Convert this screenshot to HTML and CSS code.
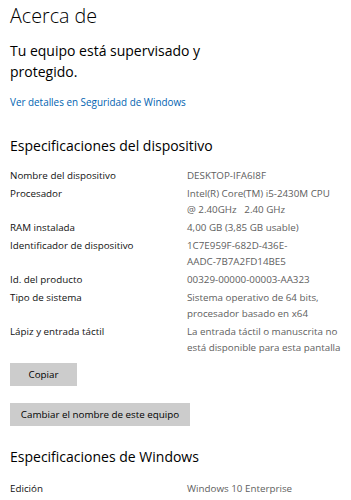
FILE: index.html
```html
<!DOCTYPE html>
<html lang="es">
<head>
<meta charset="utf-8">
<title>Acerca de</title>
<link rel="stylesheet" href="styles.css">
</head>
<body>
<main class="page">
  <h1 class="title">Acerca de</h1>
  <p class="status">Tu equipo está supervisado y<br>protegido.</p>
  <a class="link" href="#">Ver detalles en Seguridad de Windows</a>

  <h2 class="section">Especificaciones del dispositivo</h2>
  <dl class="specs">
    <div class="row"><dt>Nombre del dispositivo</dt><dd>DESKTOP-IFA6I8F</dd></div>
    <div class="row"><dt>Procesador</dt><dd>Intel(R) Core(TM) i5-2430M CPU<br>@ 2.40GHz&nbsp;&nbsp; 2.40 GHz</dd></div>
    <div class="row"><dt>RAM instalada</dt><dd>4,00 GB (3,85 GB usable)</dd></div>
    <div class="row"><dt>Identificador de dispositivo</dt><dd>1C7E959F-682D-436E-<br>AADC-7B7A2FD14BE5</dd></div>
    <div class="row"><dt>Id. del producto</dt><dd>00329-00000-00003-AA323</dd></div>
    <div class="row"><dt>Tipo de sistema</dt><dd>Sistema operativo de 64 bits,<br>procesador basado en x64</dd></div>
    <div class="row"><dt>Lápiz y entrada táctil</dt><dd>La entrada táctil o manuscrita no<br>está disponible para esta pantalla</dd></div>
  </dl>

  <button class="btn btn-copy" type="button">Copiar</button>
  <button class="btn btn-rename" type="button">Cambiar el nombre de este equipo</button>

  <h2 class="section section-win">Especificaciones de Windows</h2>
  <dl class="specs specs-win">
    <div class="row"><dt>Edición</dt><dd>Windows 10 Enterprise</dd></div>
  </dl>
</main>
</body>
</html>
```
FILE: styles.css
```css
html, body {
  margin: 0;
  padding: 0;
  background: #ffffff;
}

body {
  font-family: "Open Sans", "Noto Sans", sans-serif;
  color: #000000;
  overflow: hidden;
}

.page {
  display: flex;
  flex-direction: column;
  align-items: flex-start;
  padding: 1px 10px 0 10px;
}

.title {
  margin: 0;
  font-size: 19.7px;
  font-weight: 300;
  line-height: 30px;
}

.status {
  margin: 9px 0 0 0;
  font-size: 14px;
  line-height: 21px;
  font-weight: 400;
}

.link {
  margin-top: 12px;
  font-size: 9.9px;
  line-height: 16px;
  color: #0063b1;
  text-decoration: none;
}

.section {
  margin: 25px 0 0 0;
  font-size: 14px;
  line-height: 22px;
  font-weight: 400;
}

.specs {
  margin: 11px 0 0 0;
  display: flex;
  flex-direction: column;
  gap: 2px;
  width: 100%;
}

.row {
  display: grid;
  grid-template-columns: 177px 1fr;
  font-size: 9.8px;
  line-height: 16px;
}

.row dt {
  color: #111111;
}

.row dd {
  margin: 0;
  color: #606060;
  white-space: nowrap;
}

.btn {
  font-family: inherit;
  font-size: 9.8px;
  color: #000000;
  background: #cccccc;
  border: 0;
  border-radius: 0;
  height: 23px;
  padding: 0;
}

.btn-copy {
  margin-top: 7px;
  width: 67px;
}

.btn-rename {
  margin-top: 17px;
  width: 180px;
}

.section-win {
  margin-top: 20px;
}

.specs-win {
  margin-top: 13px;
}
```
